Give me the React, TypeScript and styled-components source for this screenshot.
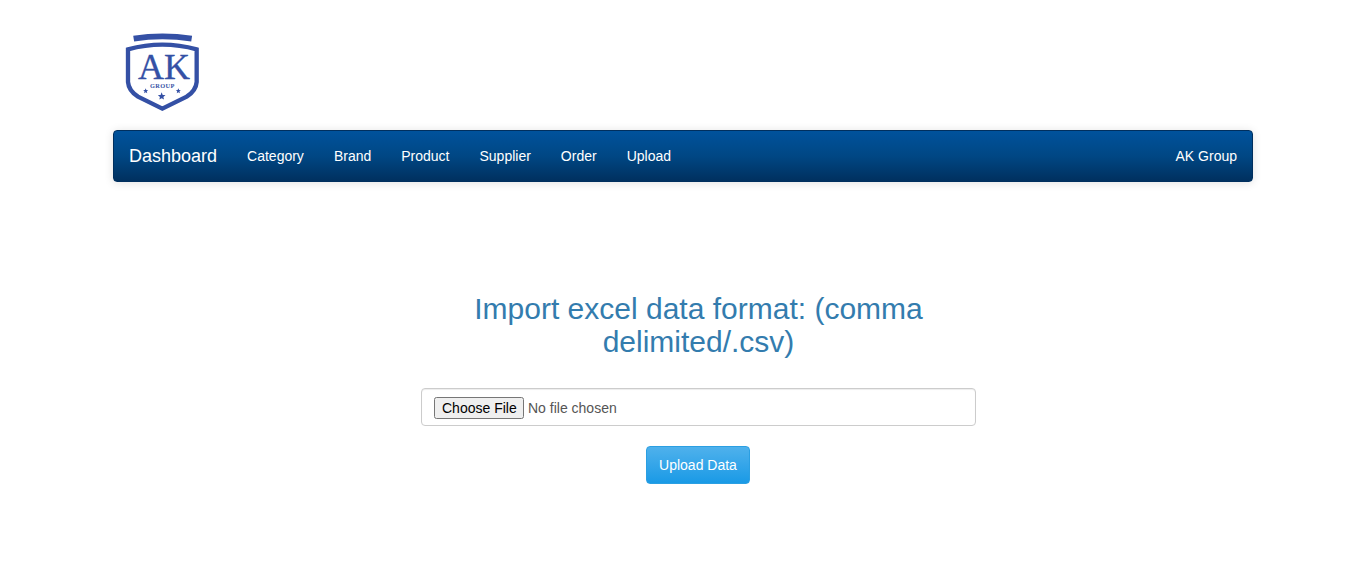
import React from "react";
import styled, { createGlobalStyle } from "styled-components";

const Global = createGlobalStyle`
  html, body { margin: 0; padding: 0; background: #fff; }
  body { font-family: "Liberation Sans", Arial, sans-serif; font-size: 14px; line-height: 20px; color: #333; }
`;

const Container = styled.div`
  width: 1140px;
  margin: 0 auto;
`;

const Header = styled.header`
  height: 110px;
  padding-top: 20px;
  box-sizing: border-box;
  margin-bottom: 20px;
`;

const LogoSvg = styled.svg`
  display: block;
  width: 110px;
  height: 100px;
  margin-left: -3px;
`;

const Navbar = styled.nav`
  display: flex;
  justify-content: space-between;
  height: 52px;
  box-sizing: border-box;
  border: 1px solid #002f5e;
  border-radius: 4px;
  background: linear-gradient(to bottom, #00529c 0%, #004784 50%, #00305f 100%);
  box-shadow: 0 1px 10px rgba(0, 0, 0, 0.12);
`;

const NavList = styled.div`
  display: flex;
  align-items: center;
`;

const Brand = styled.a`
  padding: 0 15px;
  font-size: 18px;
  line-height: 50px;
  color: #fff;
`;

const NavLink = styled.a`
  padding: 0 15px;
  line-height: 50px;
  color: #fff;
`;

const Main = styled.main`
  width: 555px;
  margin: 110px 0 0 308px;
  text-align: center;
`;

const Title = styled.h2`
  margin: 0 0 30px;
  font-size: 30px;
  font-weight: 400;
  line-height: 33px;
  color: #337cae;
`;

const FileBox = styled.div`
  height: 38px;
  box-sizing: border-box;
  padding: 8px 12px;
  border: 1px solid #ccc;
  border-radius: 4px;
  box-shadow: inset 0 1px 1px rgba(0, 0, 0, 0.075);
  text-align: left;
`;

const FileInput = styled.input`
  display: block;
  width: 100%;
  height: 22px;
  font-family: "Liberation Sans", Arial, sans-serif;
  font-size: 14px;
  color: #555;
  &::file-selector-button { font-family: inherit; font-size: 14px; width: 90px; }
`;

const UploadButton = styled.button`
  display: block;
  width: 104px;
  height: 38px;
  margin: 20px 0 0 225px;
  border: 1px solid #2b9fe2;
  border-radius: 4px;
  background: linear-gradient(to bottom, #4fb1ec 0%, #1a9ae6 100%);
  color: #fff;
  font-family: "Liberation Sans", Arial, sans-serif;
  font-size: 14px;
`;

const star = (cx: number, cy: number, r: number) => {
  const pts: string[] = [];
  for (let i = 0; i < 10; i++) {
    const rad = i % 2 === 0 ? r : r * 0.45;
    const a = -Math.PI / 2 + (i * Math.PI) / 5;
    pts.push(`${cx + rad * Math.cos(a)},${cy + rad * Math.sin(a)}`);
  }
  return pts.join(" ");
};

const Logo = () => (
  <LogoSvg viewBox="0 0 330 300" aria-label="AK Group">
    <path d="M71 56 Q157 42 245 56" fill="none" stroke="#3450a5" strokeWidth="17" />
    <path
      d="M54 88 Q157 60 260 88 L260 186 Q258 212 230 230 L157 266 L84 230 Q56 212 54 186 Z"
      fill="none"
      stroke="#3450a5"
      strokeWidth="13"
    />
    <text
      x="162"
      y="178"
      textAnchor="middle"
      fontFamily="'Liberation Serif', serif"
      fontSize="108"
      fill="#3450a5"
      stroke="#3450a5"
      strokeWidth="1"
    >
      AK
    </text>
    <text
      x="157"
      y="205"
      textAnchor="middle"
      fontFamily="'Liberation Serif', serif"
      fontWeight="700"
      fontSize="19"
      letterSpacing="1"
      fill="#3450a5"
    >
      GROUP
    </text>
    <polygon points={star(107, 213, 8)} fill="#3450a5" />
    <polygon points={star(155, 229, 12)} fill="#3450a5" />
    <polygon points={star(205, 213, 8)} fill="#3450a5" />
  </LogoSvg>
);

export default function App() {
  return (
    <>
      <Global />
      <Container>
        <Header>
          <Logo />
        </Header>
        <Navbar>
          <NavList>
            <Brand>Dashboard</Brand>
            <NavLink>Category</NavLink>
            <NavLink>Brand</NavLink>
            <NavLink>Product</NavLink>
            <NavLink>Supplier</NavLink>
            <NavLink>Order</NavLink>
            <NavLink>Upload</NavLink>
          </NavList>
          <NavList>
            <NavLink>AK Group</NavLink>
          </NavList>
        </Navbar>
        <Main>
          <Title>Import excel data format: (comma delimited/.csv)</Title>
          <FileBox>
            <FileInput type="file" />
          </FileBox>
          <UploadButton type="button">Upload Data</UploadButton>
        </Main>
      </Container>
    </>
  );
}
